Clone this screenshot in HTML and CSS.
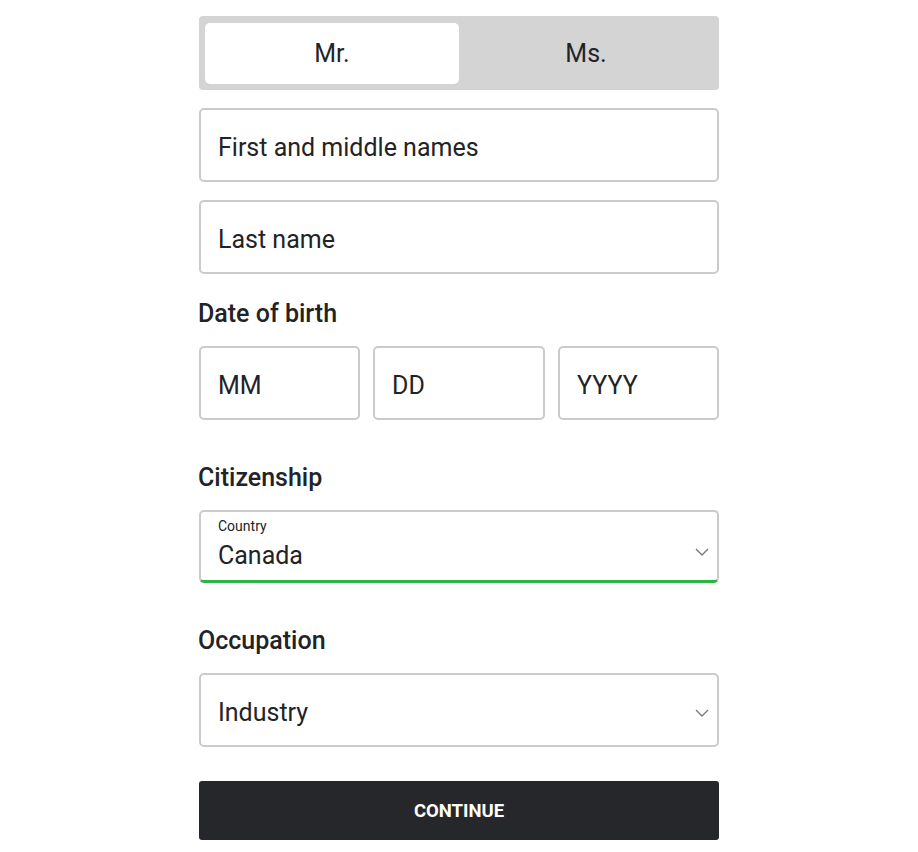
FILE: index.html
```html
<!DOCTYPE html>
<html lang="en">
<head>
  <meta charset="UTF-8" />
  <meta name="viewport" content="width=device-width, initial-scale=1.0"/>
  <title>Personal details</title>
  <link rel="stylesheet" href="styles.css">
</head>
<body>

  <form class="form">
    <div class="toggle">
      <button type="button" class="toggle-btn active">Mr.</button>
      <button type="button" class="toggle-btn">Ms.</button>
    </div>

    <input class="field" type="text" placeholder="First and middle names">
    <input class="field" type="text" placeholder="Last name">

    <h2 class="label">Date of birth</h2>
    <div class="dob">
      <input class="field" type="text" placeholder="MM">
      <input class="field" type="text" placeholder="DD">
      <input class="field" type="text" placeholder="YYYY">
    </div>

    <h2 class="label cit">Citizenship</h2>
    <div class="select selected">
      <div class="select-text">
        <span class="small">Country</span>
        <span class="value">Canada</span>
      </div>
      <svg class="chev" width="14" height="8" viewBox="0 0 14 8"><path d="M1 1l6 6 6-6" fill="none" stroke="#777" stroke-width="1.3"/></svg>
    </div>

    <h2 class="label occ">Occupation</h2>
    <div class="select">
      <div class="select-text">
        <span class="value">Industry</span>
      </div>
      <svg class="chev" width="14" height="8" viewBox="0 0 14 8"><path d="M1 1l6 6 6-6" fill="none" stroke="#777" stroke-width="1.3"/></svg>
    </div>

    <button type="button" class="continue">CONTINUE</button>
  </form>

</body>
</html>
```

FILE: styles.css
```css
* {
  box-sizing: border-box;
}

body {
  margin: 0;
  background: white;
  font-family: Roboto, "Liberation Sans", sans-serif;
  color: #222326;
}

.form {
  width: 520px;
  margin: 0 auto;
  padding-top: 16px;
  display: flex;
  flex-direction: column;
}

.toggle {
  display: grid;
  grid-template-columns: 1fr 1fr;
  background: #d4d4d4;
  border-radius: 4px;
  padding: 7px 6px 6px;
  height: 74px;
  margin-bottom: 18px;
}

.toggle-btn {
  border: none;
  background: transparent;
  font-family: inherit;
  font-size: 25px;
  color: #222326;
  border-radius: 5px;
  cursor: pointer;
}

.toggle-btn.active {
  background: white;
}

.field {
  width: 100%;
  height: 74px;
  border: 2px solid #cbcbcb;
  border-radius: 5px;
  padding: 4px 17px 0;
  font-family: inherit;
  font-size: 25px;
  color: #222326;
  margin: 0 0 18px;
  outline: none;
}

.field::placeholder {
  color: #222326;
  opacity: 1;
}

.label {
  font-size: 25px;
  font-weight: 500;
  line-height: 28px;
  margin: 8px 0 18px -1px;
}

.dob {
  display: grid;
  grid-template-columns: 161px 1fr 161px;
  gap: 13px;
}

.dob .field {
  margin: 0;
}

.label.cit {
  margin-top: 44px;
  margin-bottom: 18px;
}

.label.occ {
  margin-top: 44px;
  margin-bottom: 18px;
}

.select {
  height: 74px;
  border: 2px solid #cbcbcb;
  border-radius: 5px;
  display: flex;
  align-items: center;
  justify-content: space-between;
  padding: 5px 8px 0 17px;
}

.select.selected {
  height: 73px;
  border-bottom: 3px solid #2bb542;
  align-items: flex-start;
  padding-top: 5px;
}

.select-text {
  display: flex;
  flex-direction: column;
}

.small {
  font-size: 14px;
  line-height: 18px;
}

.value {
  font-size: 25px;
  line-height: 30px;
}

.selected .value {
  margin-top: 6px;
}

.selected .chev {
  margin-top: 31px;
}

.continue {
  margin-top: 34px;
  height: 59px;
  border: none;
  border-radius: 3px;
  background: #26272b;
  color: white;
  font-family: inherit;
  font-weight: 700;
  font-size: 18.5px;
  cursor: pointer;
}
```
